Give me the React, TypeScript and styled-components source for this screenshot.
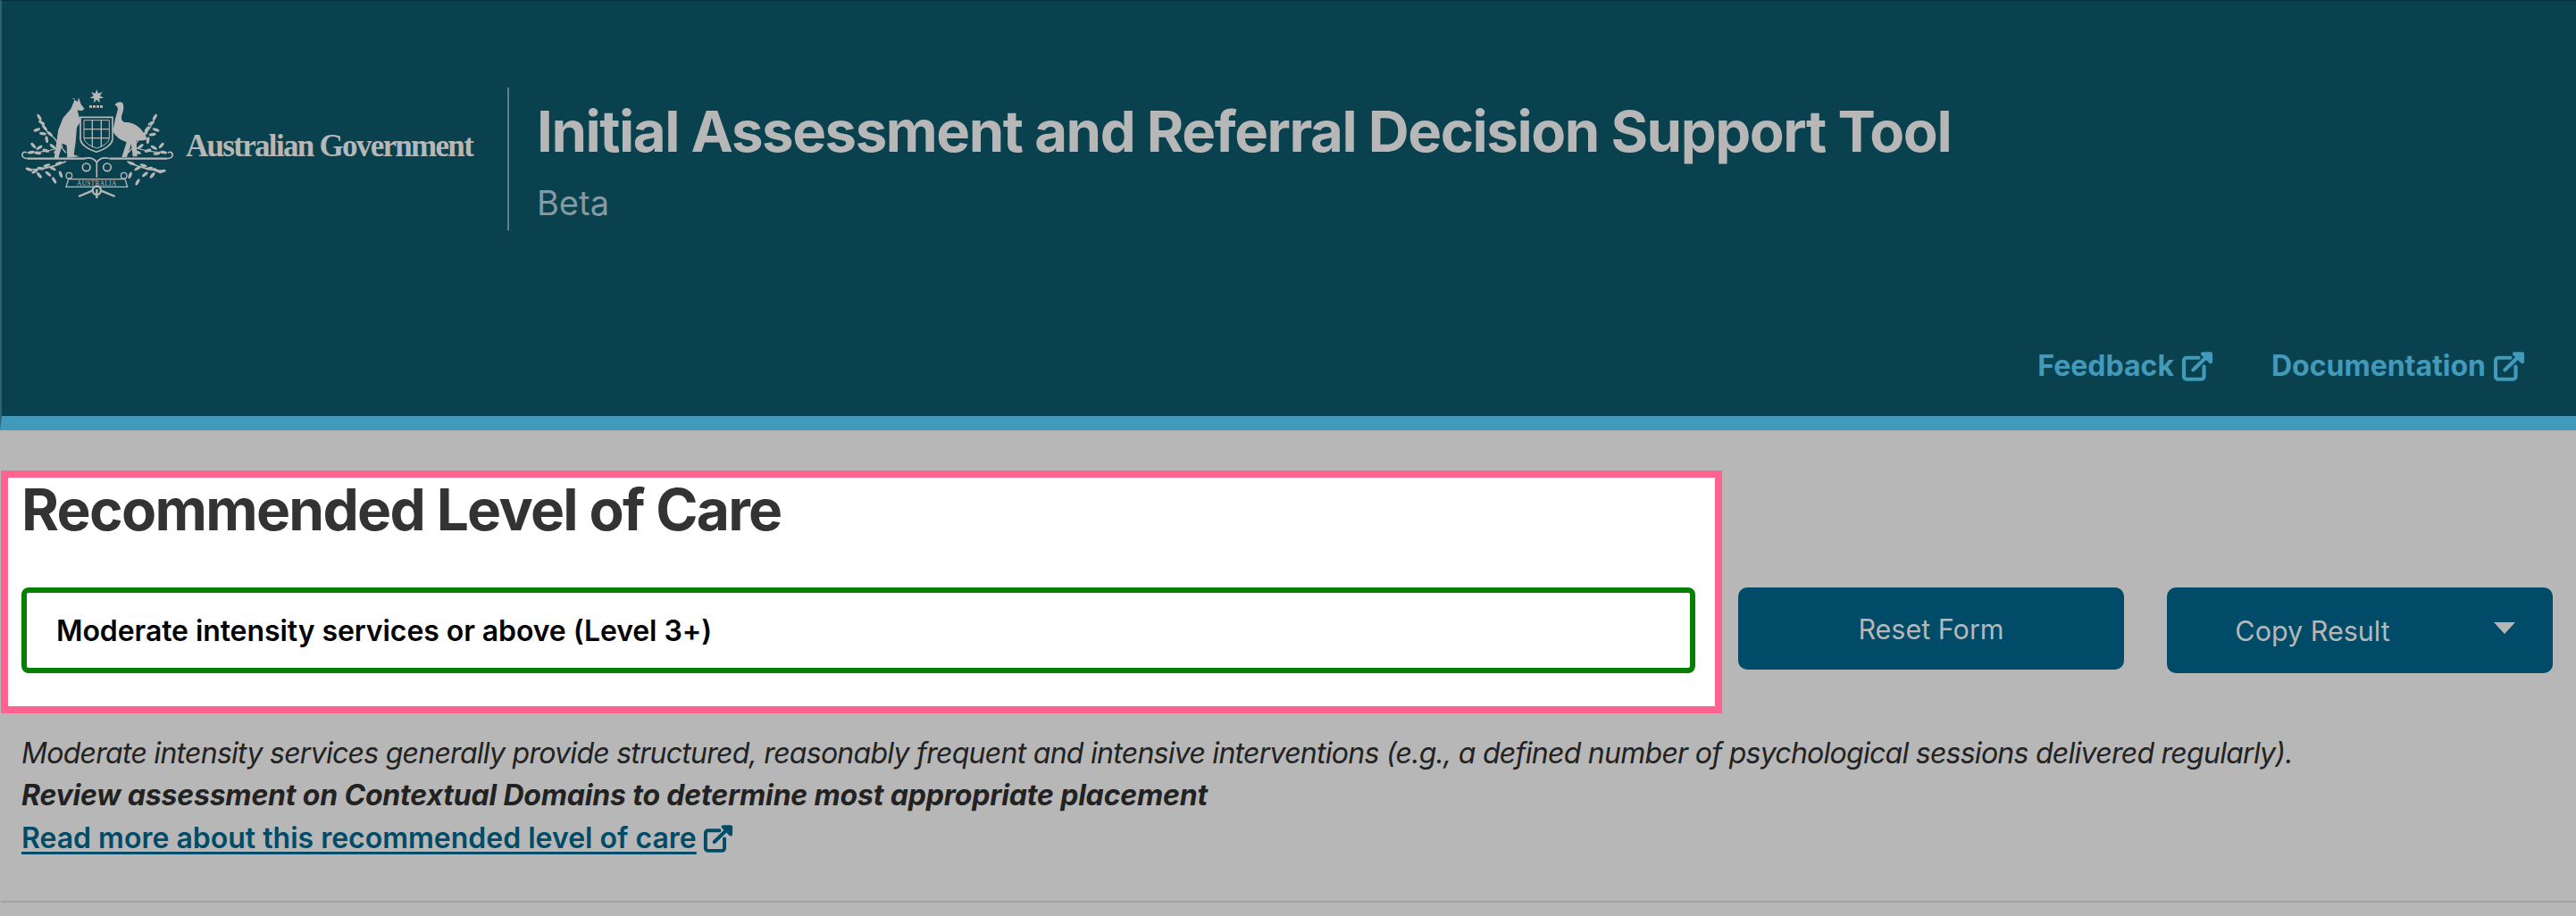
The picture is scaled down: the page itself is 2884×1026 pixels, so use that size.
import styled, { createGlobalStyle } from 'styled-components';

const GlobalStyle = createGlobalStyle`
    html, body {
        margin: 0;
        padding: 0;
        background: #b7b7b7;
    }
    body {
        font-family: Inter, "Liberation Sans", sans-serif;
    }
`;

const Page = styled.div`
    width: 2884px;
    height: 1026px;
    overflow: hidden;
    background: #b7b7b7;
`;

const Header = styled.header`
    box-sizing: border-box;
    height: 482px;
    display: flex;
    flex-direction: column;
    justify-content: space-between;
    background: #0a414f;
    border-top: 1px solid #06303b;
    border-left: 2px solid #2f626f;
    border-bottom: 16px solid #429abb;
    padding: 97px 57px 36px 22px;
`;

const Brand = styled.div`
    display: flex;
    align-items: flex-start;
`;

const LogoLockup = styled.div`
    display: flex;
    align-items: center;
    width: 544px;
    height: 126px;
`;

const GovName = styled.span`
    margin-left: 14px;
    margin-top: 5px;
    font-family: "Liberation Serif", serif;
    font-weight: 700;
    font-size: 35px;
    letter-spacing: -1.7px;
    white-space: nowrap;
    color: #b7b7b7;
`;

const TitleBlock = styled.div`
    border-left: 2px solid #5f8088;
    height: 160px;
    padding-left: 31px;
`;

const Title = styled.h1`
    margin: 0;
    font-size: 63.5px;
    line-height: 98px;
    font-weight: 700;
    letter-spacing: -1.44px;
    white-space: nowrap;
    color: #b7b7b7;
`;

const Subtitle = styled.div`
    font-size: 38px;
    line-height: 46px;
    margin-top: 8px;
    color: #85999f;
`;

const Nav = styled.nav`
    display: flex;
    justify-content: flex-end;
    gap: 65px;
`;

const NavLink = styled.a`
    display: flex;
    align-items: center;
    gap: 8px;
    font-size: 32px;
    line-height: 40px;
    font-weight: 700;
    color: #429abb;
    text-decoration: none;
`;

const Main = styled.main`
    padding-left: 1px;
`;

const TopRow = styled.div`
    display: flex;
    align-items: flex-end;
    padding-top: 45px;
`;

const Highlight = styled.section`
    box-sizing: border-box;
    width: 1927px;
    height: 272px;
    border: 8px solid #ff6391;
    background: #fff;
    padding: 0 22px 0 15px;
`;

const Heading = styled.h2`
    margin: 0 0 51px;
    font-size: 64px;
    line-height: 72px;
    font-weight: 700;
    letter-spacing: -1.7px;
    color: #333;
`;

const Result = styled.div`
    box-sizing: border-box;
    height: 96px;
    display: flex;
    align-items: center;
    padding-left: 33px;
    border: 6px solid #058005;
    border-radius: 8px;
    font-size: 32px;
    font-weight: 600;
    letter-spacing: -0.08px;
    color: #000;
`;

const Actions = styled.div`
    display: flex;
    align-items: flex-start;
    gap: 48px;
    margin: 0 0 45px 18px;
`;

const ActionButton = styled.button<{ $tall?: boolean }>`
    box-sizing: border-box;
    position: relative;
    width: 432px;
    height: ${p => (p.$tall ? '96px' : '92px')};
    border: 0;
    border-radius: 10px;
    padding: ${p => (p.$tall ? '0 106px 0 0' : '0')};
    background: #004b67;
    color: #b7b7b7;
    font-family: inherit;
    font-size: 30.5px;
    font-weight: 400;
`;

const Caret = styled.span`
    position: absolute;
    right: 42px;
    top: 39px;
    width: 0;
    height: 0;
    border-left: 12px solid transparent;
    border-right: 12px solid transparent;
    border-top: 13px solid #b7b7b7;
`;

const Notes = styled.div`
    margin: 21px 0 0 23px;
    font-size: 32px;
    line-height: 48px;
    color: #222;
`;

const NoteLine = styled.div`
    font-style: italic;
    font-weight: 400;
    height: 47px;
    letter-spacing: -0.73px;
    white-space: nowrap;
`;

const NoteStrong = styled(NoteLine)`
    font-weight: 700;
    letter-spacing: -0.18px;
    height: 48px;
`;

const MoreLink = styled.a`
    display: inline-flex;
    align-items: center;
    gap: 7px;
    font-weight: 600;
    color: #004b67;
    text-decoration: underline;
    text-decoration-thickness: 3px;
    text-underline-offset: 4px;
`;

const Divider = styled.hr`
    margin: 46px 0 0;
    border: 0;
    height: 2px;
    background: #a2a2a2;
`;

const ExternalIcon = ({ size = 36 }: { size?: number }) => (
    <svg width={size} height={size - 3} viewBox="0 0 24 22" fill="none" stroke="currentColor" strokeWidth="2.8" strokeLinecap="round" strokeLinejoin="round">
        <path d="M13 4.500H4a2 2 0 0 0-2 2V18.500a2 2 0 0 0 2 2h11a2 2 0 0 0 2-2V11" />
        <path d="M9 13.500 21 1.800" />
        <path d="M16 1.500h6v6z" fill="currentColor" />
    </svg>
);

const star = Array.from({ length: 14 }, (_, i) => {
    const r = i % 2 ? 11 : 24;
    const a = (i * Math.PI) / 7 - Math.PI / 2;
    return `${293 + r * Math.cos(a)},${80 + r * Math.sin(a)}`;
}).join(' ');

const leaves: [number, number, number][] = [
    [100, 150, 60], [108, 168, 30], [92, 192, -20], [118, 185, 50], [112, 205, 10], [135, 205, 40], [125, 225, 80],
    [80, 245, 50], [100, 252, -30], [122, 262, 20], [72, 268, -10], [145, 248, 40], [160, 265, -20], [95, 270, 10],
    [488, 150, -60], [476, 170, -30], [492, 192, 20], [462, 190, -50], [480, 208, -10], [455, 205, -40], [465, 228, -80],
    [510, 245, -50], [485, 252, 30], [465, 262, -20], [518, 268, 10], [440, 248, -40], [430, 268, 20], [495, 272, -10],
    [65, 325, 20], [85, 332, -30], [105, 322, 10], [125, 312, -20], [145, 322, 30], [165, 305, -20], [100, 345, 50], [150, 362, 60], [172, 342, 70], [130, 340, 40],
    [512, 332, -20], [492, 328, 30], [470, 322, -10], [450, 312, 20], [430, 322, -30], [410, 305, 20], [480, 345, -50], [430, 368, -60], [405, 345, -70], [455, 342, -40],
];

const Crest = () => (
    <svg width="170" height="126" viewBox="40 50 510 378" fill="#b7b7b7">
        <polygon points={star} />
        <path d="M268 114h46" stroke="#b7b7b7" strokeWidth="8" strokeDasharray="9 3" fill="none" />
        <path d="M208 84 228 98 232 84 240 106 252 122 242 129 228 126 234 150 240 162 226 184 222 234 216 276 234 282 194 286 192 244 178 238 164 288 150 288 160 218 164 192 180 152 206 122 220 88z" />
        <path d="M353 108q14-15 28-5 5 17-3 37-7 20 8 27 48-4 78 58-22 5-38 3l3 54h-15l-5-42-15 44h-17l16-50q-32-10-46-36 6-40 17-75-2-12-11-15z" />
        <g fill="none" stroke="#b7b7b7">
            <path d="M238 150h108v75q-5 25-54 42-49-17-54-42z" strokeWidth="5" fill="#0a414f" />
            <path d="M250 160h85v62q-5 20-42 32-38-12-43-32z" strokeWidth="3" />
            <path d="M278 160v90M308 160v90M250 190h85M250 220h85" strokeWidth="4" />
            <path d="M60 289h195M335 289h195" strokeWidth="7" />
            <path d="M60 289q-20-2-17-16 5-10 15-4M530 289q20-2 17-16-5-10-15-4" strokeWidth="5" />
            <path d="M100 150q10 40 50 70 20 30 40 50M488 150q-10 40-50 70-20 30-40 50M70 268q60 0 110-20M520 268q-60 0-110-20" strokeWidth="4" />
            <path d="M60 326q70 0 130-28M525 330q-70 0-130-32M293 352v-50q-12-20-40-14M293 352v-50q12-20 40-14" strokeWidth="5" />
            <circle cx="258" cy="318" r="13" strokeWidth="5" />
            <circle cx="328" cy="318" r="13" strokeWidth="5" />
            <path d="M198 358h190l8 26H190z" strokeWidth="4" />
            <path d="M232 416l48-20M354 416l-48-20M293 392v30" strokeWidth="7" />
            <circle cx="200" cy="346" r="10" strokeWidth="4" />
            <circle cx="384" cy="346" r="10" strokeWidth="4" />
        </g>
        {leaves.map(([x, y, r]) => (
            <ellipse key={`${x}-${y}`} cx={x} cy={y} rx="12" ry="5" transform={`rotate(${r} ${x} ${y})`} />
        ))}
        <circle cx="293" cy="396" r="14" fill="none" stroke="#b7b7b7" strokeWidth="7" />
        <text x="293" y="379" textAnchor="middle" fontFamily="'Liberation Serif', serif" fontSize="22" letterSpacing="1">AUSTRALIA</text>
    </svg>
);

const App = () => (
    <Page>
        <GlobalStyle />
        <Header>
            <Brand>
                <LogoLockup>
                    <Crest />
                    <GovName>Australian Government</GovName>
                </LogoLockup>
                <TitleBlock>
                    <Title>Initial Assessment and Referral Decision Support Tool</Title>
                    <Subtitle>Beta</Subtitle>
                </TitleBlock>
            </Brand>
            <Nav>
                <NavLink href="#">Feedback <ExternalIcon /></NavLink>
                <NavLink href="#">Documentation <ExternalIcon /></NavLink>
            </Nav>
        </Header>
        <Main>
            <TopRow>
                <Highlight>
                    <Heading>Recommended Level of Care</Heading>
                    <Result>Moderate intensity services or above (Level 3+)</Result>
                </Highlight>
                <Actions>
                    <ActionButton>Reset Form</ActionButton>
                    <ActionButton $tall>Copy Result<Caret /></ActionButton>
                </Actions>
            </TopRow>
            <Notes>
                <NoteLine>Moderate intensity services generally provide structured, reasonably frequent and intensive interventions (e.g., a defined number of psychological sessions delivered regularly).</NoteLine>
                <NoteStrong>Review assessment on Contextual Domains to determine most appropriate placement</NoteStrong>
                <MoreLink href="#">Read more about this recommended level of care <ExternalIcon size={34} /></MoreLink>
            </Notes>
            <Divider />
        </Main>
    </Page>
);

export default App;
